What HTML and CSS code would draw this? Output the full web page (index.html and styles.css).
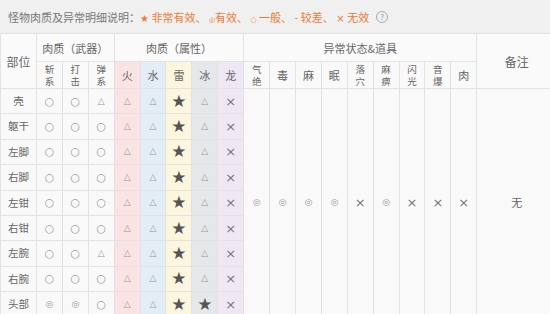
FILE: index.html
```html
<!DOCTYPE html>
<html lang="zh">
<head>
<meta charset="utf-8">
<link rel="stylesheet" href="styles.css">
</head>
<body>
<div class="bar">
  <span class="lbl">怪物肉质及异常明细说明：</span><span class="legend"><span class="sym">★</span> 非常有效、 <span class="sym sm">◎</span>有效、 <span class="sym sm">○</span> 一般、 - 较差、 <span class="sym">×</span> 无效</span>
  <span class="help">?</span>
</div>
<table class="tbl">
  <colgroup>
    <col class="c0">
    <col class="cn"><col class="cn"><col class="cn">
    <col class="cn"><col class="cn"><col class="cn"><col class="cn"><col class="cn">
    <col class="cn"><col class="cn"><col class="cn"><col class="cn"><col class="cn"><col class="cn"><col class="cn"><col class="cn"><col class="cn">
    <col class="clast">
  </colgroup>
  <thead>
    <tr class="h1">
      <th rowspan="2" class="big">部位</th>
      <th colspan="3">肉质（武器）</th>
      <th colspan="5">肉质（属性）</th>
      <th colspan="9">异常状态&amp;道具</th>
      <th rowspan="2" class="big">备注</th>
    </tr>
    <tr class="h2">
      <th class="v">斩<br>系</th><th class="v">打<br>击</th><th class="v">弹<br>系</th>
      <th class="fire">火</th><th class="water">水</th><th class="thunder">雷</th><th class="ice">冰</th><th class="dragon">龙</th>
      <th class="v">气<br>绝</th><th>毒</th><th>麻</th><th>眠</th><th class="v">落<br>穴</th><th class="v">麻<br>痹</th><th class="v">闪<br>光</th><th class="v">音<br>爆</th><th>肉</th>
    </tr>
  </thead>
  <tbody>
    <tr>
      <td class="part">壳</td><td class="o">○</td><td class="o">○</td><td class="t">△</td>
      <td class="fire t">△</td><td class="water t">△</td><td class="thunder s">★</td><td class="ice t">△</td><td class="dragon x">×</td>
      <td rowspan="9" class="d">◎</td><td rowspan="9" class="d">◎</td><td rowspan="9" class="d">◎</td><td rowspan="9" class="d">◎</td><td rowspan="9" class="x">×</td><td rowspan="9" class="d">◎</td><td rowspan="9" class="x">×</td><td rowspan="9" class="x">×</td><td rowspan="9" class="x">×</td>
      <td rowspan="9" class="note">无</td>
    </tr>
    <tr>
      <td class="part">躯干</td><td class="o">○</td><td class="o">○</td><td class="o">○</td>
      <td class="fire t">△</td><td class="water t">△</td><td class="thunder s">★</td><td class="ice t">△</td><td class="dragon x">×</td>
    </tr>
    <tr>
      <td class="part">左脚</td><td class="o">○</td><td class="o">○</td><td class="o">○</td>
      <td class="fire t">△</td><td class="water t">△</td><td class="thunder s">★</td><td class="ice t">△</td><td class="dragon x">×</td>
    </tr>
    <tr>
      <td class="part">右脚</td><td class="o">○</td><td class="o">○</td><td class="o">○</td>
      <td class="fire t">△</td><td class="water t">△</td><td class="thunder s">★</td><td class="ice t">△</td><td class="dragon x">×</td>
    </tr>
    <tr>
      <td class="part">左钳</td><td class="o">○</td><td class="o">○</td><td class="o">○</td>
      <td class="fire t">△</td><td class="water t">△</td><td class="thunder s">★</td><td class="ice t">△</td><td class="dragon x">×</td>
    </tr>
    <tr>
      <td class="part">右钳</td><td class="o">○</td><td class="o">○</td><td class="o">○</td>
      <td class="fire t">△</td><td class="water t">△</td><td class="thunder s">★</td><td class="ice t">△</td><td class="dragon x">×</td>
    </tr>
    <tr>
      <td class="part">左腕</td><td class="o">○</td><td class="o">○</td><td class="t">△</td>
      <td class="fire t">△</td><td class="water t">△</td><td class="thunder s">★</td><td class="ice t">△</td><td class="dragon x">×</td>
    </tr>
    <tr>
      <td class="part">右腕</td><td class="o">○</td><td class="o">○</td><td class="o">○</td>
      <td class="fire t">△</td><td class="water t">△</td><td class="thunder s">★</td><td class="ice t">△</td><td class="dragon x">×</td>
    </tr>
    <tr>
      <td class="part">头部</td><td class="d">◎</td><td class="d">◎</td><td class="o">○</td>
      <td class="fire t">△</td><td class="water t">△</td><td class="thunder s">★</td><td class="ice s">★</td><td class="dragon x">×</td>
    </tr>
  </tbody>
</table>
</body>
</html>
```
FILE: styles.css
```css
html, body {
  margin: 0;
  padding: 0;
  background: #f9f9f9;
  overflow: hidden;
  width: 550px;
  height: 314px;
}
body {
  font-family: "Noto Sans CJK SC", "Noto Sans", sans-serif;
  color: #666;
}
.bar {
  height: 34px;
  background: #f0f0f0;
  display: flex;
  align-items: center;
  padding-left: 8px;
  font-size: 11px;
  box-sizing: border-box;
  border-bottom: 1px solid #dedede;
  white-space: nowrap;
}
.lbl { color: #777; }
.legend { color: #ee7a34; }
.sym { font-family: "DejaVu Sans", sans-serif; font-size: 10px; }
.sym.sm { font-size: 7px; }
.help {
  display: inline-flex;
  align-items: center;
  justify-content: center;
  width: 10px;
  height: 10px;
  border: 1px solid #aaa;
  border-radius: 50%;
  color: #999;
  font-size: 8px;
  margin-left: 7px;
  line-height: 1;
}
.tbl {
  border-collapse: collapse;
  table-layout: fixed;
  width: 556px;
  margin-top: -1px;
}
.c0 { width: 36px; }
.cn { width: 25.9px; }
.clast { width: 79.7px; }
.tbl th, .tbl td {
  border: 1px solid #e2e2e2;
  text-align: center;
  vertical-align: middle;
  padding: 0;
  font-weight: normal;
  overflow: hidden;
}
.tbl th {
  font-size: 11px;
  color: #666;
}
.h1 { height: 28px; }
.h1 th { background: #fafafa; }
.h2 { height: 27px; }
.big { font-size: 12px !important; }
.v { line-height: 12.5px; font-size: 9.5px !important; }
.tbl tbody tr { height: 25.4px; }
.tbl td {
  font-size: 11px;
  color: #888;
  line-height: 1;
}
.part { color: #666 !important; font-size: 10.5px !important; }
.o, .t, .s, .x, .d { font-family: "DejaVu Sans", sans-serif; }
.o { font-size: 11px; color: #999 !important; }
.t { font-size: 9px !important; color: #999 !important; }
.s { font-size: 17px !important; color: #555 !important; }
.x { font-size: 13px !important; color: #777 !important; }
.d { font-size: 9px !important; color: #999 !important; }
.note { color: #666 !important; }
.fire { background: #fae3e3; }
.water { background: #e2edf7; }
.thunder { background: #fdf6de; }
.ice { background: #e4e8eb; }
.dragon { background: #f0e7f5; }
```
